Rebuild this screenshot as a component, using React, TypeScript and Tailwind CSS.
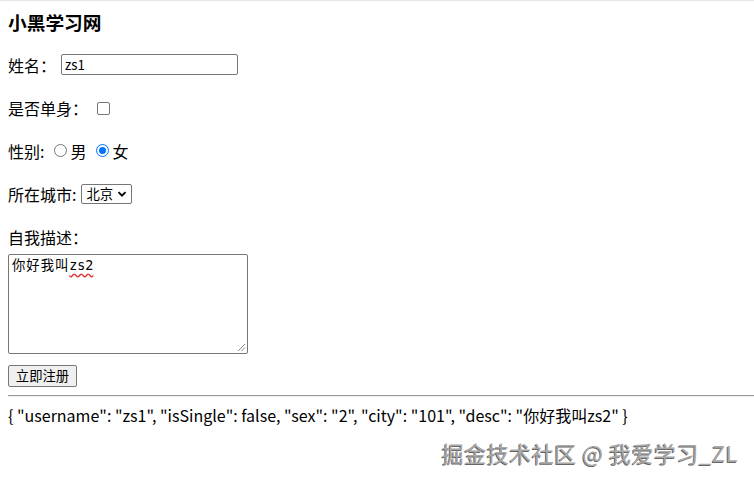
import React from "react";

const cjk = '"Noto Sans CJK SC", "Noto Sans", sans-serif';

export default function App() {
  return (
    <div
      className="w-[754px] h-[483px] bg-white border-t border-[#e6e6e6] text-black overflow-hidden relative"
      style={{ fontFamily: cjk }}
    >
      <div className="flex flex-col px-2">
        <h3 className="mt-[9px] h-[24px] leading-[24px] text-[18.72px] font-bold">小黑学习网</h3>

        <div className="mt-[17px] h-[27px] flex items-center text-[16px]">
          <span>姓名：</span>
          <div className="ml-[5px] w-[177px] h-[21px] border border-[#767676] rounded-[2px] flex items-center px-[3px] text-[13.33px]">
            zs1
          </div>
        </div>

        <div className="mt-[16px] h-[27px] flex items-center text-[16px]">
          <span>是否单身：</span>
          <div className="ml-[9px] mt-[1px] w-[13px] h-[13px] border border-[#767676] rounded-[2px] bg-white" />
        </div>

        <div className="mt-[16px] h-[27px] flex items-center text-[16px]">
          <span>性别:</span>
          <div className="ml-[10px] w-[13px] h-[13px] rounded-full border border-[#767676]" />
          <span className="ml-[3px]">男</span>
          <div className="ml-[10px] w-[13px] h-[13px] rounded-full border-[1px] border-[#0075ff] flex items-center justify-center">
            <div className="w-[7px] h-[7px] rounded-full bg-[#0075ff]" />
          </div>
          <span className="ml-[3px]">女</span>
        </div>

        <div className="mt-[16px] h-[27px] flex items-center text-[16px]">
          <span>所在城市:</span>
          <div className="ml-[5px] mt-[1px] w-[51px] h-[20px] border border-[#767676] rounded-[2px] flex items-center pl-[4px] text-[13.33px] gap-[4px]">
            <span>北京</span>
            <svg width="10" height="10" viewBox="0 0 10 10">
              <path d="M1.5 3.2 L5 6.7 L8.5 3.2" fill="none" stroke="#000" strokeWidth="1.8" />
            </svg>
          </div>
        </div>

        <div className="mt-[16px] h-[27px] flex items-center text-[16px]">
          <span>自我描述：</span>
        </div>

        <div className="mt-[4px] w-[240px] h-[100px] border border-[#767676] rounded-[2px] relative px-[3px] py-[2px] text-[13.33px] leading-[16px]">
          <span className="tracking-[1px]">你好我叫</span>
          <span
            className="underline decoration-wavy decoration-[#e03030] underline-offset-[3px]"
            style={{ fontFamily: '"DejaVu Sans Mono", monospace' }}
          >
            zs2
          </span>
          <svg className="absolute right-[1px] bottom-[1px]" width="9" height="9" viewBox="0 0 9 9">
            <path d="M8 1 L1 8 M8 4.5 L4.5 8" stroke="#888" strokeWidth="1" />
          </svg>
        </div>

        <div className="mt-[11px] flex">
          <div className="flex w-[69px] h-[22px] items-center justify-center bg-[#efefef] border border-[#767676] rounded-[2px] text-[13.33px]">
            立即注册
          </div>
        </div>

        <div className="mt-[8px] h-[2px] border-t border-[#9a9a9a] border-b border-b-[#eeeeee] mr-[-8px]" />

        <div className="mt-[8px] h-[20px] leading-[20px] text-[16px]">
          {'{ "username": "zs1", "isSingle": false, "sex": "2", "city": "101", "desc": "你好我叫zs2" }'}
        </div>

        <div className="mt-[13px] flex justify-end pr-[8px]">
          <span className="text-[22px] leading-[28px] tracking-[0.5px] text-[#a8a8a8] [text-shadow:-1px_1px_0_#666]">
            掘金技术社区 @ 我爱学习_ZL
          </span>
        </div>
      </div>
    </div>
  );
}
